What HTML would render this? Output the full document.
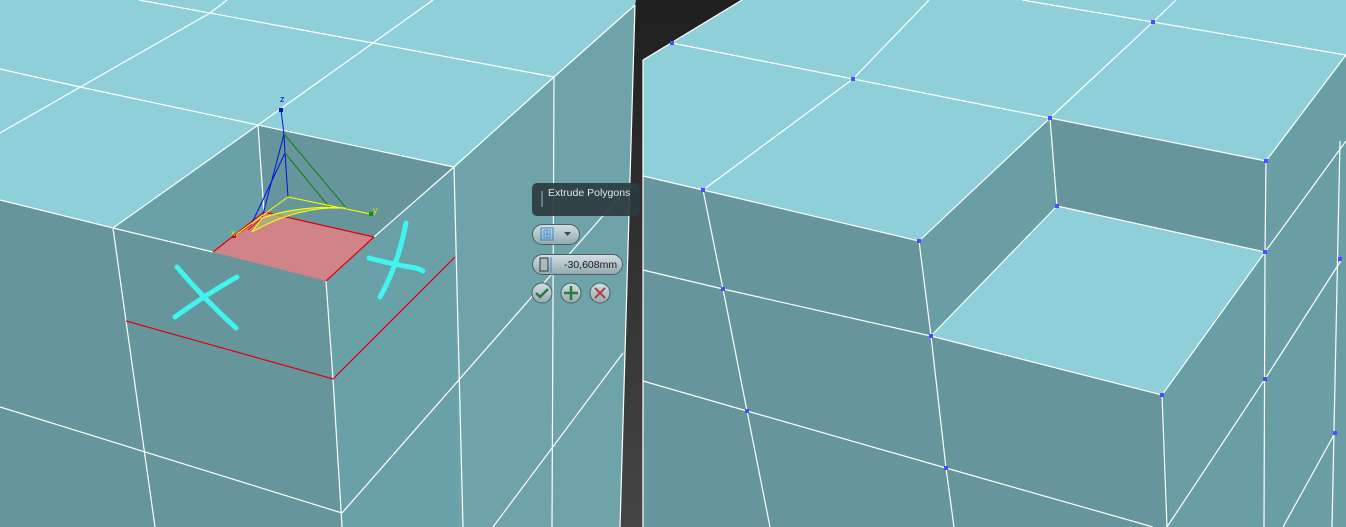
<!DOCTYPE html>
<html><head><meta charset="utf-8"><style>
html,body{margin:0;padding:0;width:1346px;height:527px;overflow:hidden;background:#2a2a2a;}
svg{display:block;}
</style></head><body>
<svg width="1346" height="527" viewBox="0 0 1346 527" xmlns="http://www.w3.org/2000/svg" font-family="Liberation Sans, sans-serif">
<defs>
<linearGradient id="pill" x1="0" y1="0" x2="0" y2="1"><stop offset="0" stop-color="#d3dfe2"/><stop offset="1" stop-color="#92a9ae"/></linearGradient>
<linearGradient id="gap" x1="0" y1="0" x2="0" y2="1"><stop offset="0" stop-color="#1f1f1f"/><stop offset="1" stop-color="#454545"/></linearGradient>
</defs>
<rect x="0" y="0" width="1346" height="527" fill="url(#gap)"/>
<!-- LEFT PANEL -->
<polygon points="0,0 636,0 635,5 620,527 0,527" fill="#66969c"/>
<polygon points="454,167 635,5 620,527 458,527" fill="#6ea3aa"/>
<polygon points="326,281 374,237 454,167 458,527 342,527" fill="#6aa0a7"/>
<polygon points="0,0 636,0 635,5 454,167 258,125 113,228 0,200" fill="#8ecfda"/>
<polygon points="113,228 258,125 264,212 213,252" fill="#6aa0a7"/>
<polygon points="258,125 454,167 374,237 264,212" fill="#66969c"/>
<polygon points="213,252 264,212 374,237 326,281" fill="#d08488"/>
<g stroke="#fff" stroke-width="1.2" fill="none">
<polyline points="0,200 113,228 258,125 454,167"/>
<polyline points="113,228 213,252"/>
<polyline points="258,125 264,212"/>
<polyline points="0,69 80,87 258,125"/>
<polyline points="139,0 373,43 554,77"/>
<polyline points="0,133 210,13 227,0"/>
<polyline points="258,125 373,43 433,0"/>
<polyline points="635,5 554,77 454,167"/>
<polyline points="554,77 552,527"/>
<polyline points="454,167 463,527"/>
<polyline points="635,5 620,527"/>
<polyline points="342,513 623,193"/>
<polyline points="493,527 623,353"/>
<polyline points="374,237 454,167"/>
<polyline points="326,281 333,379 342,527"/>
<polyline points="113,228 126,321 155,527"/>
<polyline points="0,407 342,513"/>
</g>
<g stroke="#e00010" stroke-width="1.2" fill="none">
<polyline points="126,321 333,379 455,257"/>
<polyline points="213,252 264,212 374,237"/>
<polyline points="326,281 374,237"/>
</g>
<g fill="none" stroke-width="1">
<polyline points="281,110 284,134 285,153 288,197" stroke="#0010e0"/>
<polyline points="284,134 262,218" stroke="#0010e0"/>
<polyline points="285,153 251,225" stroke="#0010e0"/>
<polyline points="284,134 348,210" stroke="#108010"/>
<polyline points="285,153 330,208" stroke="#108010"/>
<polyline points="251,225 234,236" stroke="#e00010"/>
<polyline points="262,218 248,230" stroke="#e00010"/>
<path d="M262,218 Q300,205 346,208 L330,208 Q290,210 252,232 Z" fill="#a9b878" stroke="#ffff00" fill-opacity="0.8"/>
<polyline points="288,197 234,236" stroke="#ffff00"/>
<polyline points="288,197 371,214" stroke="#ffff00"/>
</g>
<rect x="279" y="108" width="4" height="4" fill="#0010d0"/>
<rect x="369" y="212" width="4" height="4" fill="#109010"/>
<rect x="232" y="234" width="4" height="4" fill="#c01010"/>
<text x="280" y="102" font-size="9" fill="#0010d0">z</text>
<text x="373" y="213" font-size="9" fill="#e0e000">y</text>
<text x="231" y="236" font-size="9" fill="#e0e000">x</text>
<g stroke="#40f4f0" stroke-width="5" stroke-linecap="round" fill="none">
<path d="M177,267 Q205,300 236,328"/>
<path d="M237,277 Q205,295 175,317"/>
<path d="M406,223 Q398,265 380,297"/>
<path d="M369,258 Q395,265 410,267 Q418,268 423,271"/>
</g>
<rect x="532" y="183" width="108" height="33" rx="5" fill="#2c3b3f" fill-opacity="0.92"/>
<rect x="541" y="191" width="2" height="16" fill="#6a7a7e"/>
<text x="548" y="196" font-size="10.5" fill="#dfe6e8">Extrude Polygons</text>
<rect x="532.5" y="224.5" width="47" height="20" rx="10" fill="url(#pill)" stroke="#4d5e62"/>
<rect x="541" y="228" width="12" height="12" fill="none" stroke="#2e86d8"/>
<path d="M544,230h6v8h-6zM547,230v8M544,234h6" stroke="#2e86d8" fill="none" stroke-width="0.8"/>
<path d="M564,232 l7,0 l-3.5,4z" fill="#445"/>
<rect x="532.5" y="254.5" width="90" height="20" rx="10" fill="url(#pill)" stroke="#4d5e62"/>
<rect x="540" y="258" width="8" height="13" fill="#a9bcc0" stroke="#333"/>
<path d="M551,257v15" stroke="#2e86d8"/>
<text x="564" y="268" font-size="10.5" fill="#1a1a1a">-30,608mm</text>
<circle cx="542" cy="293" r="10" fill="url(#pill)" stroke="#4d5e62"/>
<circle cx="571" cy="293" r="10" fill="url(#pill)" stroke="#4d5e62"/>
<circle cx="600" cy="293" r="10" fill="url(#pill)" stroke="#4d5e62"/>
<path d="M536,293 l4,4 l8,-8" stroke="#2c7a3a" stroke-width="2.5" fill="none"/>
<path d="M571,286v14M564,293h14" stroke="#2c7a3a" stroke-width="2.5"/>
<path d="M595,288l10,10M605,288l-10,10" stroke="#b04040" stroke-width="2"/>
<!-- RIGHT PANEL -->
<polygon points="643,60 742,0 1346,0 1346,527 643,527" fill="#66959b"/>
<polygon points="643,60 742,0 1346,0 1346,55 1266,161 1050,118 919,241 703,190 643,176" fill="#8ecfda"/>
<polygon points="1050,118 1057,206 931,336 919,241" fill="#6a9ea5"/>
<polygon points="1057,206 1265,252 1162,395 931,336" fill="#8ecfda"/>
<polygon points="1266,161 1346,55 1346,527 1170,527 1162,395 1265,252" fill="#6a9ea5"/>
<g stroke="#fff" stroke-width="1.2" fill="none">
<polyline points="643,60 742,0"/>
<polyline points="643,60 643,527"/>
<polyline points="672,43 853,79 1050,118 1266,161"/>
<polyline points="1022,0 1153,22 1346,55"/>
<polyline points="853,79 929,0"/>
<polyline points="703,190 853,79"/>
<polyline points="1176,0 1153,22 1050,118 919,241"/>
<polyline points="643,176 703,190 919,241"/>
<polyline points="1346,55 1266,161 1265,252 1264,527"/>
<polyline points="1050,118 1057,206 1265,252 1162,395 931,336 1057,206"/>
<polyline points="919,241 931,336 946,468 954,527"/>
<polyline points="703,190 723,289 747,411 770,527"/>
<polyline points="643,270 723,289 931,336"/>
<polyline points="643,381 747,411 946,468 1153,527"/>
<polyline points="1162,395 1167,527"/>
<polyline points="1265,252 1346,141"/>
<polyline points="1167,527 1265,379 1342,259"/>
<polyline points="1283,527 1335,433"/>
<polyline points="1340,141 1332,527"/>
</g>
<g fill="#4a4cff">
<rect x="670" y="41" width="4" height="4"/><rect x="851" y="77" width="4" height="4"/><rect x="1048" y="116" width="4" height="4"/>
<rect x="1264" y="159" width="4" height="4"/><rect x="1151" y="20" width="4" height="4"/><rect x="701" y="188" width="4" height="4"/>
<rect x="917" y="239" width="4" height="4"/><rect x="1055" y="204" width="4" height="4"/><rect x="1263" y="250" width="4" height="4"/>
<rect x="929" y="334" width="4" height="4"/><rect x="1160" y="393" width="4" height="4"/><rect x="721" y="287" width="4" height="4"/>
<rect x="745" y="409" width="4" height="4"/><rect x="944" y="466" width="4" height="4"/><rect x="1263" y="377" width="4" height="4"/>
<rect x="1338" y="257" width="4" height="4"/><rect x="1333" y="431" width="4" height="4"/>
</g>
</svg>
</body></html>
